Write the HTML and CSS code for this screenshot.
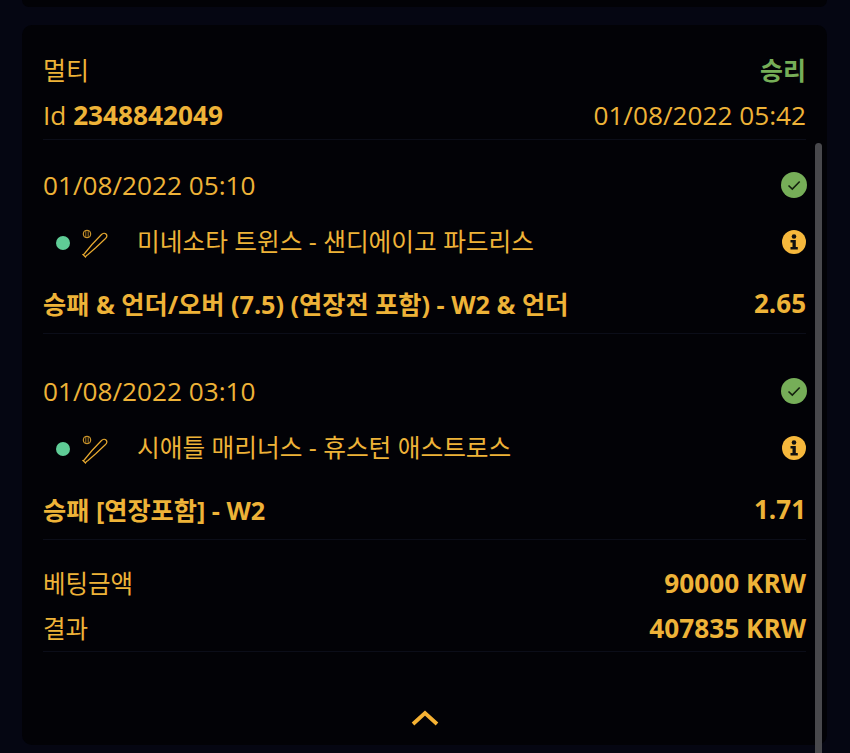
FILE: index.html

```html
<!DOCTYPE html>
<html lang="ko">
<head>
    <meta charset="UTF-8">
    <meta name="viewport" content="width=device-width, initial-scale=1.0">
    <title>베팅 내역</title>
    <link rel="stylesheet" href="styles.css">
</head>
<body>

    <div class="prev-card"></div>

    <div class="card">
        <div class="scrollbar"></div>

        <div class="row head-top">
            <span>멀티</span>
            <span class="won">승리</span>
        </div>
        <div class="row head-id">
            <span>Id <b>2348842049</b></span>
            <span>01/08/2022 05:42</span>
        </div>

        <div class="selection first">
            <div class="row sel-date">
                <span>01/08/2022 05:10</span>
                <svg class="check" viewBox="0 0 26 26">
                    <circle cx="13" cy="13" r="13" fill="#76ae58"/>
                    <path d="M7.5 13.5l3.8 3.6 7.4-7.6" fill="none" stroke="#14210f" stroke-width="1.6"/>
                </svg>
            </div>
            <div class="row sel-match">
                <span class="live-dot"></span>
                <svg class="sport" viewBox="0 0 28 30">
                    <circle cx="6" cy="5" r="3.8" fill="none" stroke="#e8aa30" stroke-width="1"/>
                    <path d="M4.800 1.800v6.400M7.200 1.800v6.400" stroke="#e8aa30" stroke-width=".7"/>
                    <path d="M2 25.500l2.500 2.500 1-1.500 1.200-.8 8-7 9.800-9.200c1.500-1.500 1.500-3.500.5-4.500-1-1-3-1-4.500.5l-9.500 10-7 8.500-.8 1z" fill="none" stroke="#e8aa30" stroke-width="1.200"/>
                </svg>
                <span class="match-name">미네소타 트윈스 - 샌디에이고 파드리스</span>
                <svg class="info" viewBox="0 0 24 24">
                    <circle cx="12" cy="12" r="12" fill="#f6b83c"/>
                    <circle cx="12" cy="6.500" r="2.300" fill="#111"/>
                    <path d="M8.500 10h5.300v7h2v2.500H8.500V17h2v-4.500h-2z" fill="#111"/>
                </svg>
            </div>
            <div class="row sel-market">
                <span>승패 &amp; 언더/오버 (7.5) (연장전 포함) - W2 &amp; 언더</span>
                <span class="odds">2.65</span>
            </div>
        </div>

        <div class="selection">
            <div class="row sel-date">
                <span>01/08/2022 03:10</span>
                <svg class="check" viewBox="0 0 26 26">
                    <circle cx="13" cy="13" r="13" fill="#76ae58"/>
                    <path d="M7.5 13.5l3.8 3.6 7.4-7.6" fill="none" stroke="#14210f" stroke-width="1.6"/>
                </svg>
            </div>
            <div class="row sel-match">
                <span class="live-dot"></span>
                <svg class="sport" viewBox="0 0 28 30">
                    <circle cx="6" cy="5" r="3.8" fill="none" stroke="#e8aa30" stroke-width="1"/>
                    <path d="M4.800 1.800v6.400M7.200 1.800v6.400" stroke="#e8aa30" stroke-width=".7"/>
                    <path d="M2 25.500l2.500 2.500 1-1.500 1.200-.8 8-7 9.800-9.200c1.500-1.500 1.500-3.500.5-4.500-1-1-3-1-4.500.5l-9.500 10-7 8.500-.8 1z" fill="none" stroke="#e8aa30" stroke-width="1.200"/>
                </svg>
                <span class="match-name">시애틀 매리너스 - 휴스턴 애스트로스</span>
                <svg class="info" viewBox="0 0 24 24">
                    <circle cx="12" cy="12" r="12" fill="#f6b83c"/>
                    <circle cx="12" cy="6.500" r="2.300" fill="#111"/>
                    <path d="M8.500 10h5.300v7h2v2.500H8.500V17h2v-4.500h-2z" fill="#111"/>
                </svg>
            </div>
            <div class="row sel-market">
                <span>승패 [연장포함] - W2</span>
                <span class="odds">1.71</span>
            </div>
        </div>

        <div class="summary">
            <div class="row sum-row">
                <span>베팅금액</span>
                <b>90000 KRW</b>
            </div>
            <div class="row sum-row">
                <span>결과</span>
                <b>407835 KRW</b>
            </div>
        </div>

        <div class="collapse">
            <svg class="chevron" viewBox="0 0 28 16">
                <path d="M2 14L14 3l12 11" fill="none" stroke="#f6b233" stroke-width="3.800"/>
            </svg>
        </div>
    </div>

</body>
</html>
```

FILE: styles.css

```css
body {
    margin: 0;
    height: 753px;
    overflow: hidden;
    background-color: #050612;
    font-family: "Open Sans", "Noto Sans CJK KR", sans-serif;
    font-size: 26.2px;
    color: #eeb338;
}
b {
    font-weight: 700;
}
.prev-card {
    height: 7px;
    margin: 0 23px 18px 22px;
    background-color: #020206;
    border-radius: 0 0 10px 10px;
}
.card {
    position: relative;
    height: 720px;
    margin: 0 23px 0 22px;
    padding: 0 21px;
    box-sizing: border-box;
    background-color: #020206;
    border-radius: 10px;
}
.scrollbar {
    position: absolute;
    top: 118px;
    right: 5px;
    width: 7px;
    height: 620px;
    background-color: #48484c;
    border-radius: 4px;
}
.row {
    display: flex;
    justify-content: space-between;
    align-items: center;
}
.head-top {
    padding-top: 24px;
    height: 40px;
    font-size: 25px;
}
.won {
    color: #76ae58;
    font-weight: 700;
}
.head-id {
    height: 46px;
    padding: 3px 0 1px;
    border-bottom: 1px solid #0b0d18;
}
.selection {
    border-bottom: 1px solid #0b0d18;
    margin-top: 35px;
}
.selection.first {
    margin-top: 23px;
}
.sel-date {
    height: 44px;
    padding-bottom: 2px;
}
.check {
    width: 26px;
    height: 26px;
    margin-right: -1px;
}
.sel-match {
    justify-content: flex-start;
    height: 62px;
    padding: 0 0 2px 13px;
}
.live-dot {
    width: 14px;
    height: 14px;
    margin-top: 6px;
    border-radius: 50%;
    background-color: #5fcc96;
    flex-shrink: 0;
}
.sport {
    width: 28px;
    height: 30px;
    margin-top: 8px;
    margin-left: 11px;
    flex-shrink: 0;
}
.match-name {
    margin-left: 28px;
    flex-grow: 1;
    font-size: 24.7px;
}
.info {
    width: 24px;
    height: 24px;
    margin-top: 4px;
}
.sel-market {
    height: 60px;
    font-weight: 700;
    font-size: 25.2px;
}
.odds {
    font-size: 26px;
}
.summary {
    margin-top: 20px;
    border-bottom: 1px solid #0b0d18;
    padding-bottom: 1px;
}
.sum-row {
    height: 45px;
}
.sum-row span {
    font-size: 24.5px;
}
.collapse {
    display: flex;
    justify-content: center;
    padding-top: 58px;
}
.chevron {
    width: 28px;
    height: 16px;
}
```
